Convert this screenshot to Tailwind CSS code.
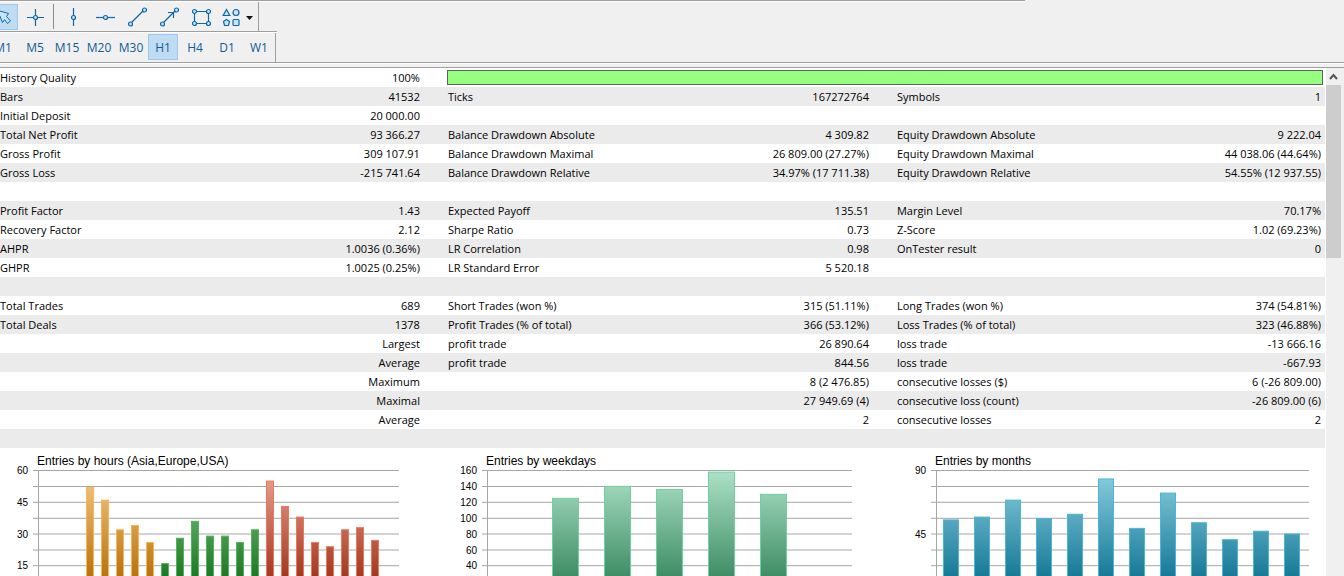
<!DOCTYPE html>
<html lang="en">

<head>
    <meta charset="UTF-8">
    <meta name="viewport" content="width=device-width, initial-scale=1.0">
    <title>Strategy Tester Report</title>
    <script src="https://cdn.jsdelivr.net/npm/@tailwindcss/browser@4"></script>
</head>

<body class="h-screen overflow-hidden flex flex-col bg-[#f0f0f0] font-['Open_Sans','Noto_Sans',sans-serif] text-[11px] leading-[19px] text-black">
    <header class="shrink-0">
        <div class="h-0.5 w-[76.3%] border-t border-[#9f9f9f] bg-white"></div>

        <!-- drawing tools -->
        <div class="flex h-[29px] w-[259px] items-center border-r border-[#9f9f9f]">
            <button aria-label="Cursor" class="flex h-[26px] w-[18px] items-center border border-l-0 border-[#99c9f2] bg-[#c0dcf3]">
                <svg width="12" height="16" viewBox="0 0 12 16" fill="#c5e6fb" stroke="#0f67a8"><path d="M-2 1.500L8.500 4.500L6.500 7.500L10.500 12L7.500 14.500L4.500 10.500L2.500 13.500L-1 5" /></svg>
            </button>
            <button aria-label="Crosshair" class="ml-[9px] h-[18px] w-[18px]">
                <svg width="18" height="18" viewBox="0 0 18 18" fill="#c5e6fb" stroke="#0f67a8" stroke-width="1.200"><path d="M0 9.500H17M8.500 1V18" /><circle cx="8.500" cy="9.500" r="2" /></svg>
            </button>
            <span class="ml-2 h-[25px] w-px bg-[#8c8c8c]"></span>
            <button aria-label="Vertical line" class="ml-[11px] h-[18px] w-[18px]">
                <svg width="18" height="18" viewBox="0 0 18 18" fill="#c5e6fb" stroke="#0f67a8" stroke-width="1.200"><path d="M8.500 0V18" /><circle cx="8.500" cy="9.500" r="2" /></svg>
            </button>
            <button aria-label="Horizontal line" class="ml-[13px] h-[18px] w-[20px]">
                <svg width="20" height="18" viewBox="0 0 20 18" fill="#c5e6fb" stroke="#0f67a8" stroke-width="1.200"><path d="M0 9.500H19" /><circle cx="9.500" cy="9.500" r="2" /></svg>
            </button>
            <button aria-label="Trend line" class="ml-[11px] h-5 w-5">
                <svg width="20" height="20" viewBox="0 0 20 20" fill="#c5e6fb" stroke="#0f67a8" stroke-width="1.200"><path d="M3 17L17 3" /><circle cx="3.500" cy="17" r="2" /><circle cx="17.500" cy="3" r="2" /></svg>
            </button>
            <button aria-label="Arrow line" class="ml-3 h-5 w-5">
                <svg width="20" height="20" viewBox="0 0 20 20" fill="#c5e6fb" stroke="#0f67a8" stroke-width="1.200"><path d="M3 17L17 3" /><path d="M9 5.500H14.500V11" fill="none" /><circle cx="3.500" cy="17" r="2" /><circle cx="17.500" cy="3" r="2" /></svg>
            </button>
            <button aria-label="Rectangle" class="ml-3 h-5 w-5">
                <svg width="20" height="20" viewBox="0 0 20 20" fill="#c5e6fb" stroke="#0f67a8" stroke-width="1.200"><path d="M3.500 4.500H17.500V16.500H3.500Z" fill="none" /><circle cx="3.500" cy="4.500" r="2" /><circle cx="17.500" cy="4.500" r="2" /><circle cx="3.500" cy="16.500" r="2" /><circle cx="17.500" cy="16.500" r="2" /></svg>
            </button>
            <button aria-label="Objects" class="ml-[11px] h-5 w-8">
                <svg width="32" height="20" viewBox="0 0 32 20" fill="#c5e6fb" stroke="#0f67a8" stroke-width="1.200"><path d="M4.500 2.500L7.800 8.500H1.200Z" /><circle cx="14" cy="5.500" r="3" /><path d="M4.500 12.500L7.500 14.500L6.500 18.500H2.500L1.500 14.500Z" /><rect x="11" y="12.500" width="6" height="6" rx="1" /><path d="M24 9h7l-3.500 4z" fill="#111" stroke="none" /></svg>
            </button>
        </div>

        <!-- timeframes -->
        <div class="h-px w-[277px] bg-[#9f9f9f]"></div>
        <div class="h-px w-[277px] bg-white"></div>
        <div class="h-[29px] w-[276px] overflow-hidden border-r border-[#9f9f9f]">
            <div class="-ml-3 flex gap-0.5 pt-px text-[12px] text-[#0f5c94] *:h-[26px] *:w-[30px]">
                <button>M1</button>
                <button>M5</button>
                <button>M15</button>
                <button>M20</button>
                <button>M30</button>
                <button class="border border-[#99c9f2] bg-[#c0dcf3]">H1</button>
                <button>H4</button>
                <button>D1</button>
                <button>W1</button>
            </div>
        </div>
        <div class="h-0.5 border-t border-[#9f9f9f] bg-white"></div>
        <div class="h-1 border-b border-[#9f9f9f]"></div>
    </header>

    <main class="flex min-h-0 flex-1 pr-[3px]">
        <div class="min-w-0 flex-1 overflow-hidden bg-white pr-px">
            <table class="w-full table-fixed">
                <colgroup>
                    <col class="w-[16.4%]">
                    <col class="w-[16.35%]">
                    <col class="w-[17%]">
                    <col class="w-[16.89%]">
                    <col>
                    <col>
                </colgroup>
                <tbody id="report"></tbody>
            </table>
            <div id="charts" class="grid grid-cols-[449fr_449fr_427fr]"></div>
        </div>
        <div class="w-[15px] shrink-0">
            <button aria-label="Scroll up" class="flex h-[17px] w-full items-center justify-center">
                <svg width="9" height="7" viewBox="0 0 9 7" fill="none" stroke="#555" stroke-width="2"><path d="M1 6L4.500 2L8 6" /></svg>
            </button>
            <div class="h-[173px] bg-[#cdcdcd]"></div>
        </div>
    </main>

    <script>
        const rows = [
            ["History Quality", "100%", null],
            ["Bars", "41532", "Ticks", "167272764", "Symbols", "1"],
            ["Initial Deposit", "20 000.00", "", "", "", ""],
            ["Total Net Profit", "93 366.27", "Balance Drawdown Absolute", "4 309.82", "Equity Drawdown Absolute", "9 222.04"],
            ["Gross Profit", "309 107.91", "Balance Drawdown Maximal", "26 809.00 (27.27%)", "Equity Drawdown Maximal", "44 038.06 (44.64%)"],
            ["Gross Loss", "-215 741.64", "Balance Drawdown Relative", "34.97% (17 711.38)", "Equity Drawdown Relative", "54.55% (12 937.55)"],
            ["", "", "", "", "", ""],
            ["Profit Factor", "1.43", "Expected Payoff", "135.51", "Margin Level", "70.17%"],
            ["Recovery Factor", "2.12", "Sharpe Ratio", "0.73", "Z-Score", "1.02 (69.23%)"],
            ["AHPR", "1.0036 (0.36%)", "LR Correlation", "0.98", "OnTester result", "0"],
            ["GHPR", "1.0025 (0.25%)", "LR Standard Error", "5 520.18", "", ""],
            ["", "", "", "", "", ""],
            ["Total Trades", "689", "Short Trades (won %)", "315 (51.11%)", "Long Trades (won %)", "374 (54.81%)"],
            ["Total Deals", "1378", "Profit Trades (% of total)", "366 (53.12%)", "Loss Trades (% of total)", "323 (46.88%)"],
            ["", "Largest", "profit trade", "26 890.64", "loss trade", "-13 666.16"],
            ["", "Average", "profit trade", "844.56", "loss trade", "-667.93"],
            ["", "Maximum", "", "8 (2 476.85)", "consecutive losses ($)", "6 (-26 809.00)"],
            ["", "Maximal", "", "27 949.69 (4)", "consecutive loss (count)", "-26 809.00 (6)"],
            ["", "Average", "", "2", "consecutive losses", "2"],
            ["", "", "", "", "", ""]
        ];

        const cellClass = [
            "p-0", "p-0 pr-3.5 text-right",
            "p-0 pl-3.5", "p-0 pr-3.5 text-right",
            "p-0 pl-3.5", "p-0 pr-1 text-right"
        ];

        document.getElementById("report").innerHTML = rows.map(row => {
            const cells = row.map((text, i) => {
                if (text === null) {
                    return `<td colspan="4" class="p-0 pl-[13px] pr-0.5"><div class="h-[15px] border border-[#606060] bg-[#97ff80]"></div></td>`;
                }
                return `<td class="${cellClass[i]} whitespace-nowrap">${text}</td>`;
            }).join("");
            return `<tr class="h-[19px] even:bg-[#ebebeb]">${cells}</tr>`;
        }).join("");

        const palette = {
            orange: { top: "#f7cb8c", bottom: "#b87310", edge: "#ffb54f" },
            green: { top: "#8cc98f", bottom: "#1c7a24", edge: "#54b45c" },
            red: { top: "#eba594", bottom: "#a5381f", edge: "#ea785f" },
            mint: { top: "#aee2c8", bottom: "#3f8e66", edge: "#70d0a0" },
            blue: { top: "#8dd0e2", bottom: "#177a97", edge: "#4cb6d4" }
        };

        const charts = [
            {
                title: "Entries by hours (Asia,Europe,USA)", max: 60, end: 399, x: 86, step: 15, width: 8,
                labels: ["60", "", "45", "", "30", "", "15"],
                values: [52, 46, 32, 34, 26, 16, 28, 36, 29, 29, 26, 32, 55, 43, 38, 26, 24, 32, 33, 27],
                color: i => i < 5 ? "orange" : i < 12 ? "green" : "red"
            },
            {
                title: "Entries by weekdays", max: 160, end: 403, x: 103, step: 52, width: 27,
                labels: ["160", "140", "120", "100", "80", "60", "40"],
                values: [125, 140, 136, 158, 130],
                color: () => "mint"
            },
            {
                title: "Entries by months", max: 90, end: 411, x: 45, step: 31, width: 16,
                labels: ["90", "", "", "", "45", "", ""],
                values: [55, 57, 69, 56, 59, 84, 49, 74, 53, 41, 47, 45],
                color: () => "blue"
            }
        ];

        const gridY = [22.5, 38.5, 54.3, 70.3, 86, 102, 117.7];
        const plotTop = 22;
        const plotHeight = 127;

        document.getElementById("charts").innerHTML = charts.map((chart, n) => {
            const defs = Object.entries(palette).map(([name, c]) =>
                `<linearGradient id="${name}${n}" gradientUnits="userSpaceOnUse" x1="0" y1="22" x2="0" y2="128">
                    <stop offset="0" stop-color="${c.top}" /><stop offset="1" stop-color="${c.bottom}" />
                </linearGradient>`).join("");
            const lines = gridY.map(y => `<path d="M33 ${y}H${chart.end}" />`).join("");
            const labels = chart.labels.map((t, i) =>
                `<text x="28" y="${Math.floor(gridY[i]) + 4}" text-anchor="end" class="text-[10px]">${t}</text>`).join("");
            const bars = chart.values.map((v, i) => {
                const name = chart.color(i);
                const y = plotTop + plotHeight * (1 - v / chart.max);
                return `<rect x="${chart.x + i * chart.step + 0.5}" y="${y + 0.5}" width="${chart.width - 1}"
                    height="${plotTop + plotHeight - y}" fill="url(#${name}${n})" stroke="${palette[name].edge}" />`;
            }).join("");
            return `<svg class="h-[150px] w-full font-['Liberation_Sans',sans-serif]">
                <defs>${defs}</defs>
                <g stroke="#a6a6a6">${lines}<path d="M38.5 22V149" /></g>
                ${bars}${labels}
                <text x="37" y="17" class="text-[12px]">${chart.title}</text>
            </svg>`;
        }).join("");
    </script>
</body>

</html>
